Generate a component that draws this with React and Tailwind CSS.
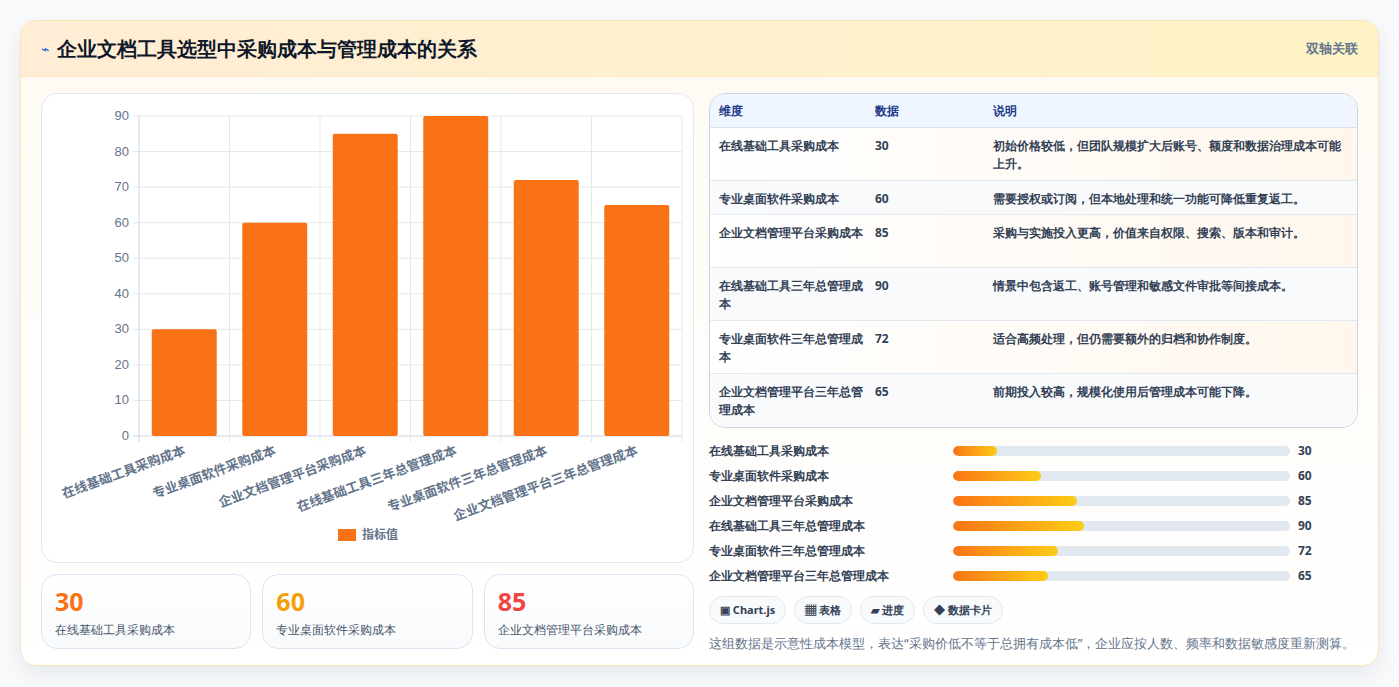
import React from 'react'

const data = [
  ['在线基础工具采购成本', 30, '初始价格较低，但团队规模扩大后账号、额度和数据治理成本可能上升。'],
  ['专业桌面软件采购成本', 60, '需要授权或订阅，但本地处理和统一功能可降低重复返工。'],
  ['企业文档管理平台采购成本', 85, '采购与实施投入更高，价值来自权限、搜索、版本和审计。'],
  ['在线基础工具三年总管理成本', 90, '情景中包含返工、账号管理和敏感文件审批等间接成本。'],
  ['专业桌面软件三年总管理成本', 72, '适合高频处理，但仍需要额外的归档和协作制度。'],
  ['企业文档管理平台三年总管理成本', 65, '前期投入较高，规模化使用后管理成本可能下降。'],
]

const Chart = () => {
  const x0 = 97, top = 22, bottom = 342, colW = 90.5
  const y = (v) => bottom - (v / 90) * (bottom - top)
  return (
    <svg width="652" height="469" className="block">
      {[0, 10, 20, 30, 40, 50, 60, 70, 80, 90].map((t) => (
        <g key={t}>
          <line x1={x0 - 6} x2={640} y1={y(t)} y2={y(t)} stroke={t === 0 ? '#cbd5e1' : '#e5e7eb'} />
          <text x={x0 - 10} y={y(t) + 4} textAnchor="end" fontSize="13" fill="#64748b" fontFamily="Liberation Sans, sans-serif">{t}</text>
        </g>
      ))}
      {[0, 1, 2, 3, 4, 5, 6].map((i) => (
        <line key={i} x1={x0 + i * colW} x2={x0 + i * colW} y1={top} y2={bottom + 6} stroke={i === 0 ? '#cbd5e1' : '#e5e7eb'} />
      ))}
      {data.map(([name, v], i) => {
        const cx = x0 + i * colW + colW / 2
        return (
          <g key={name}>
            <rect x={cx - 32.5} y={y(v)} width="65" height={bottom - y(v)} rx="2" fill="#f97316" />
            <text x={cx + 2} y={360} textAnchor="end" transform={`rotate(-20 ${cx + 2} 360)`} fontSize="13" fontWeight="700" fill="#64748b" fontFamily="'Liberation Sans','Noto Sans CJK SC',sans-serif">{name}</text>
          </g>
        )
      })}
      <rect x="296" y="435" width="18" height="12" fill="#f97316" />
      <text x="320" y="445" fontSize="12" fontWeight="700" fill="#64748b" fontFamily="'Liberation Sans','Noto Sans CJK SC',sans-serif">指标值</text>
    </svg>
  )
}

const App = () => {
  return (
    <div className="w-[1399px] h-[687px] bg-[#f8fafc] p-5 font-['Liberation_Sans','Noto_Sans_CJK_SC',sans-serif]">
      <div className="h-[646px] rounded-2xl border border-[#fde2b8] bg-gradient-to-b from-[#fffaf3] to-white shadow-[0_8px_24px_rgba(15,23,42,0.08)] overflow-hidden">
        <div className="h-[56px] flex items-center justify-between px-5 bg-gradient-to-r from-[#ffedd5] to-[#fef3c7] border-b border-[#fde7c4]">
          <div className="flex items-center gap-2">
            <span className="text-[#2563eb] text-sm">⌁</span>
            <h1 className="text-[20px] font-bold text-[#0f172a]">企业文档工具选型中采购成本与管理成本的关系</h1>
          </div>
          <span className="text-[13px] font-bold text-[#64748b]">双轴关联</span>
        </div>
        <div className="flex gap-[15px] px-5 pt-4">
          <div className="w-[653px] flex flex-col gap-[11px]">
            <div className="h-[470px] rounded-2xl border border-[#e2e8f0] bg-white">
              <Chart />
            </div>
            <div className="grid grid-cols-3 gap-[11px]">
              {[['30', 'text-[#f97316]', data[0][0]], ['60', 'text-[#f59e0b]', data[1][0]], ['85', 'text-[#ef4444]', data[2][0]]].map(([n, c, l]) => (
                <div key={n} className="h-[75px] rounded-2xl border border-[#dbe5f1] bg-gradient-to-b from-white to-[#f8fafc] px-[13px] pt-[10px]">
                  <div className={`text-[25px] font-bold leading-[32px] ${c}`}>{n}</div>
                  <div className="text-[12px] text-[#475569] mt-[4px]">{l}</div>
                </div>
              ))}
            </div>
          </div>
          <div className="flex-1">
            <div className="rounded-2xl border border-[#cbd5e1] overflow-hidden">
              <div className="h-[34px] flex items-center bg-[#eff6ff] text-[12px] font-bold text-[#1e3a8a] border-b border-[#dbe3ee]">
                <div className="w-[165px] pl-[9px]">维度</div>
                <div className="w-[118px]">数据</div>
                <div>说明</div>
              </div>
              {data.map(([name, v, d], i) => (
                <div key={name} className={`flex text-[12px] font-bold text-[#334155] leading-[18px] border-b last:border-b-0 border-[#e2e8f0] ${i % 2 ? 'bg-[#f8fafc]' : 'bg-gradient-to-r from-white to-[#fff7ed]'} ${i === 1 ? 'h-[34px]' : 'h-[53px]'} pt-[9px]`}>
                  <div className="w-[165px] pl-[9px] pr-2">{name}</div>
                  <div className="w-[118px]">{v}</div>
                  <div className="flex-1 pr-4">{d}</div>
                </div>
              ))}
            </div>
            <div className="mt-[10px] flex flex-col">
              {data.map(([name, v]) => (
                <div key={name} className="h-[25px] flex items-center text-[12px] font-bold text-[#334155]">
                  <div className="w-[244px]">{name}</div>
                  <div className="w-[337px] h-[10px] rounded-full bg-[#e2e8f0] overflow-hidden">
                    <div className="h-full rounded-full bg-gradient-to-r from-[#f97316] to-[#facc15]" style={{ width: `${v * 0.433}%` }} />
                  </div>
                  <div className="ml-2 text-[#334155]">{v}</div>
                </div>
              ))}
            </div>
            <div className="flex gap-2 mt-[8px]">
              {['▣ Chart.js', '▦ 表格', '▰ 进度', '◆ 数据卡片'].map((c) => (
                <span key={c} className="h-[28px] px-[10px] flex items-center rounded-full border border-[#e2e8f0] bg-[#f8fafc] text-[11px] font-bold text-[#334155]">{c}</span>
              ))}
            </div>
            <p className="mt-[10px] text-[13px] text-[#64748b]">这组数据是示意性成本模型，表达“采购价低不等于总拥有成本低”，企业应按人数、频率和数据敏感度重新测算。</p>
          </div>
        </div>
      </div>
    </div>
  )
}

export default App
